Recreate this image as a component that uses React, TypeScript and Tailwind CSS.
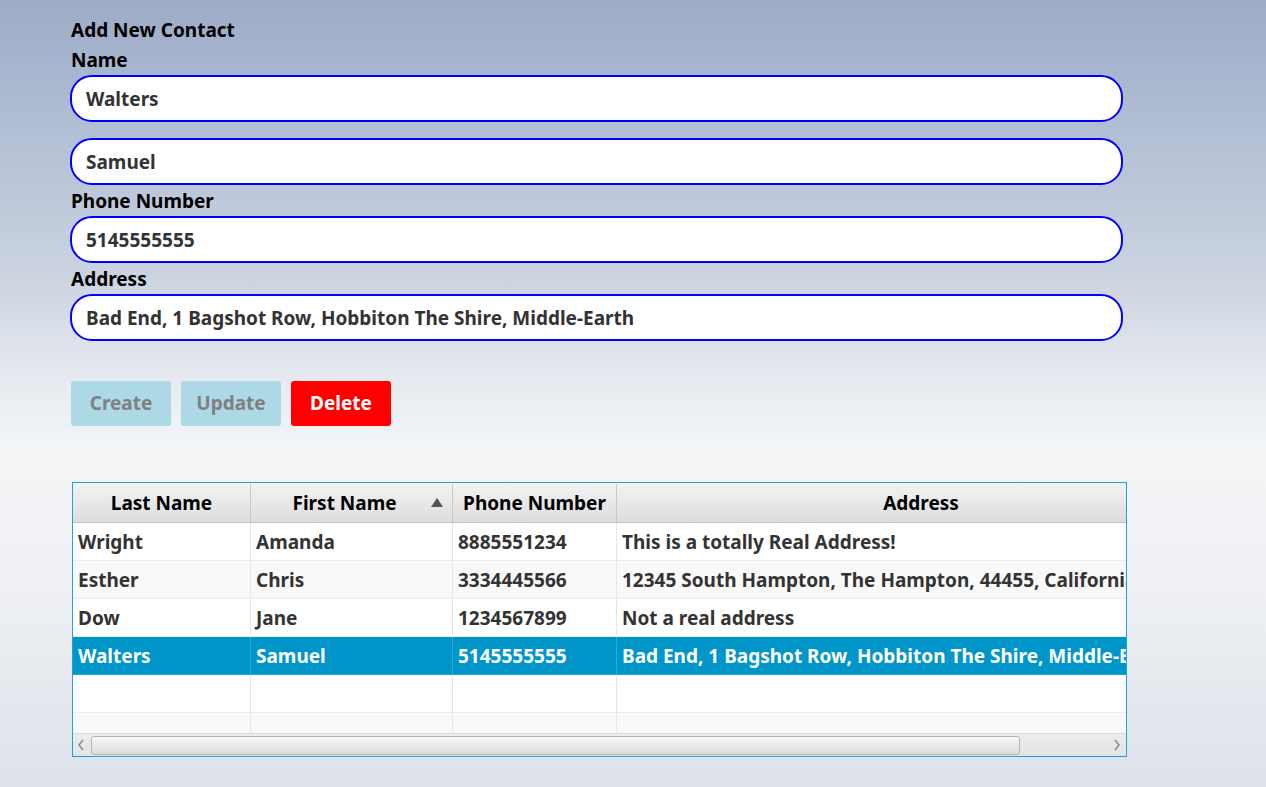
import React from "react";

type Contact = { last: string; first: string; phone: string; address: string };

const CONTACTS: Contact[] = [
  { last: "Wright", first: "Amanda", phone: "8885551234", address: "This is a totally Real Address!" },
  { last: "Esther", first: "Chris", phone: "3334445566", address: "12345 South Hampton, The Hampton, 44455, California, USA" },
  { last: "Dow", first: "Jane", phone: "1234567899", address: "Not a real address" },
  { last: "Walters", first: "Samuel", phone: "5145555555", address: "Bad End, 1 Bagshot Row, Hobbiton The Shire, Middle-Earth" },
];

const FONT = "font-['Noto_Sans','Open_Sans',sans-serif]";

const Field = ({ value, className = "" }: { value: string; className?: string }) => (
  <div className={`h-[47px] w-[1053px] rounded-[22px] border-2 border-[#0000ff] bg-white flex items-center pl-[14px] pt-[2px] ${className}`}>
    <span className="text-[19px] font-bold text-[#333333]">{value}</span>
  </div>
);

const Label = ({ text, className = "" }: { text: string; className?: string }) => (
  <div className={`h-[24px] leading-[24px] text-[19px] font-bold text-black ${className}`}>{text}</div>
);

const Cell = ({ children, w, selected }: { children?: React.ReactNode; w: string; selected?: boolean }) => (
  <div
    className={`${w} shrink-0 h-full flex items-center pl-[5px] pt-[2px] border-r whitespace-nowrap overflow-hidden ${
      selected ? "border-[#2ea6d3]" : "border-[#e6e6e6]"
    }`}
  >
    {children}
  </div>
);

const ContactTable = () => {
  const rows: (Contact | null)[] = [...CONTACTS, null, null];
  return (
    <div className="w-[1055px] h-[275px] border border-[#21a3d9] bg-white flex flex-col overflow-hidden">
      <div className="w-[1152px] h-[40px] shrink-0 flex border-b border-[#c4c4c4] bg-[linear-gradient(180deg,#f3f3f3,#dddddd)] text-[19px] font-bold text-black pt-[1px]">
        <div className="w-[178px] shrink-0 flex items-center justify-center border-r border-[#c8c8c8]">Last Name</div>
        <div className="w-[202px] shrink-0 relative flex items-center justify-center pr-[14px] border-r border-[#c8c8c8]">
          First Name
          <span className="absolute right-[9px] top-[14px] w-0 h-0 border-l-[6px] border-r-[6px] border-b-[9px] border-l-transparent border-r-transparent border-b-[#555555]" />
        </div>
        <div className="w-[164px] shrink-0 flex items-center justify-center border-r border-[#c8c8c8]">Phone Number</div>
        <div className="w-[608px] shrink-0 flex items-center justify-center">Address</div>
      </div>
      <div className="flex-1 overflow-hidden">
        {rows.map((c, i) => {
          const selected = i === 3;
          const bg = selected
            ? "bg-[#0096c9] text-white border-[#2aa5d4]"
            : i % 2 === 1
            ? "bg-[#f9f9f9] text-[#333333] border-[#ebebeb]"
            : "bg-white text-[#333333] border-[#ebebeb]";
          return (
            <div key={i} className={`w-[1152px] h-[38px] flex border-b text-[19px] font-bold ${bg}`}>
              <Cell w="w-[178px]" selected={selected}>{c?.last}</Cell>
              <Cell w="w-[202px]" selected={selected}>{c?.first}</Cell>
              <Cell w="w-[164px]" selected={selected}>{c?.phone}</Cell>
              <Cell w="w-[608px]" selected={selected}>{c?.address}</Cell>
            </div>
          );
        })}
      </div>
      <div className="h-[23px] shrink-0 flex items-center bg-[linear-gradient(180deg,#ececec,#e4e4e4)] border-t border-[#dcdcdc]">
        <svg width="18" height="22" viewBox="0 0 18 22" className="shrink-0">
          <path d="M10 6 L6 11 L10 16" fill="none" stroke="#8a8a8a" strokeWidth="1.5" />
        </svg>
        <div className="w-[929px] h-[19px] rounded-[3px] border border-[#b4b4b4] bg-[linear-gradient(180deg,#f7f7f7,#dcdcdc)]" />
        <div className="flex-1" />
        <svg width="18" height="22" viewBox="0 0 18 22" className="shrink-0">
          <path d="M7 6 L11 11 L7 16" fill="none" stroke="#8a8a8a" strokeWidth="1.5" />
        </svg>
      </div>
    </div>
  );
};

export default function App() {
  return (
    <div
      className={`w-full h-[787px] overflow-hidden ${FONT} bg-[linear-gradient(180deg,#9dabc8_0%,#b4c0d5_18%,#cbd3e0_35%,#e6eaf0_48%,#f3f5f7_57%,#eef0f3_75%,#dde2ea_100%)]`}
    >
      <div className="pl-[70px] pt-[18px] flex flex-col items-start">
        <Label text="Add New Contact" className="ml-[1px]" />
        <Label text="Name" className="mt-[6px] ml-[1px]" />
        <Field value="Walters" className="mt-[3px]" />
        <Field value="Samuel" className="mt-[16px]" />
        <Label text="Phone Number" className="mt-[4px] ml-[1px]" />
        <Field value="5145555555" className="mt-[3px]" />
        <Label text="Address" className="mt-[4px] ml-[1px]" />
        <Field value="Bad End, 1 Bagshot Row, Hobbiton The Shire, Middle-Earth" className="mt-[3px]" />

        <div className="mt-[40px] ml-[1px] flex gap-[10px] text-[19px] font-bold">
          <button className="w-[100px] h-[45px] rounded-[3px] bg-[#add8e6] text-[#808080]">Create</button>
          <button className="w-[100px] h-[45px] rounded-[3px] bg-[#add8e6] text-[#808080]">Update</button>
          <button className="w-[100px] h-[45px] rounded-[3px] bg-[#ff0000] text-white">Delete</button>
        </div>

        <div className="mt-[56px] ml-[2px]">
          <ContactTable />
        </div>
      </div>
    </div>
  );
}
